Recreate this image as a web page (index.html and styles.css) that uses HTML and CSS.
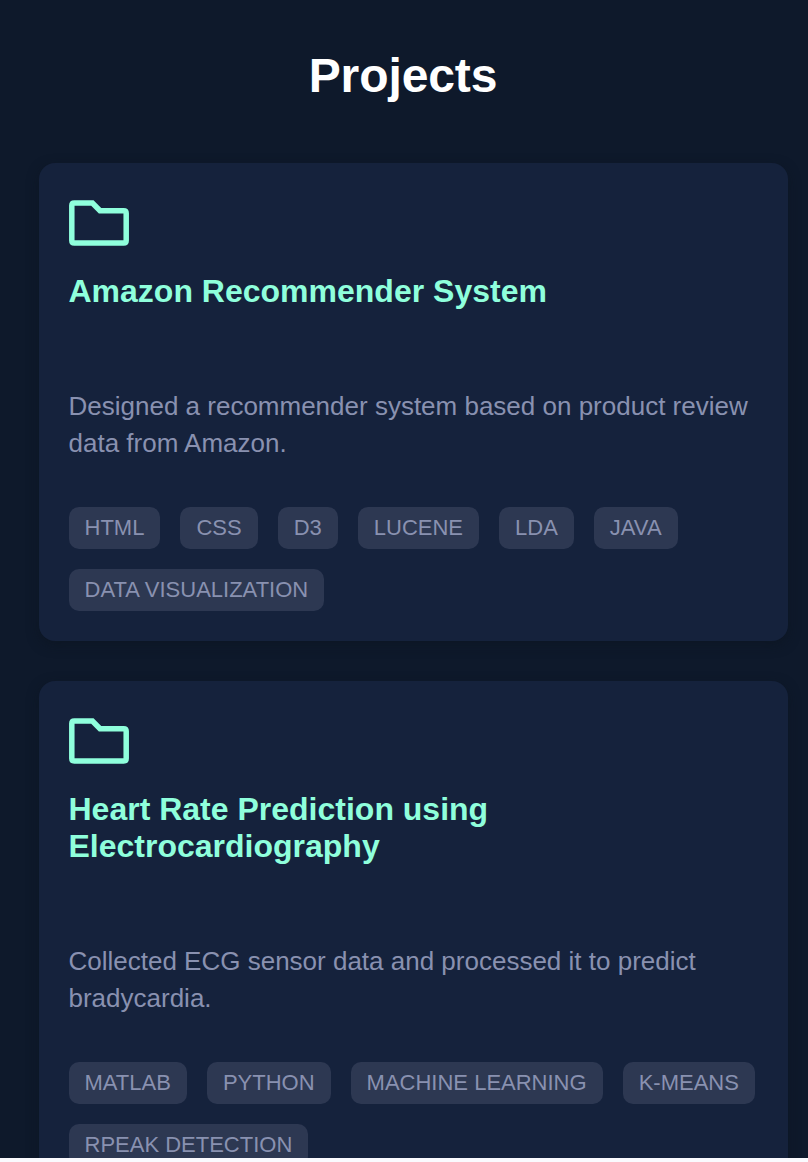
FILE: index.html
```html
<!DOCTYPE html>
<html lang="en">
<head>
<meta charset="utf-8">
<title>Projects</title>
<link rel="stylesheet" href="styles.css">
</head>
<body>
<main class="projects">
  <h1 class="heading">Projects</h1>
  <section class="list">
    <article class="card">
      <svg class="folder" viewBox="0 0 60 46"><path d="M5.3 3.1H23.4L31 10.8H54.7Q57.2 10.8 57.2 13.3V40.4Q57.2 42.9 54.7 42.9H5.3Q2.8 42.9 2.8 40.4V5.6Q2.8 3.1 5.3 3.1Z"/></svg>
      <h2 class="title">Amazon Recommender System</h2>
      <p class="description">Designed a recommender system based on product review data from Amazon.</p>
      <ul class="tags">
        <li class="tag">HTML</li><li class="tag">CSS</li><li class="tag">D3</li><li class="tag">LUCENE</li><li class="tag">LDA</li><li class="tag">JAVA</li><li class="tag">DATA VISUALIZATION</li>
      </ul>
    </article>
    <article class="card">
      <svg class="folder" viewBox="0 0 60 46"><path d="M5.3 3.1H23.4L31 10.8H54.7Q57.2 10.8 57.2 13.3V40.4Q57.2 42.9 54.7 42.9H5.3Q2.8 42.9 2.8 40.4V5.6Q2.8 3.1 5.3 3.1Z"/></svg>
      <h2 class="title">Heart Rate Prediction using Electrocardiography</h2>
      <p class="description">Collected ECG sensor data and processed it to predict bradycardia.</p>
      <ul class="tags">
        <li class="tag">MATLAB</li><li class="tag">PYTHON</li><li class="tag">MACHINE LEARNING</li><li class="tag">K-MEANS</li><li class="tag">RPEAK DETECTION</li>
      </ul>
    </article>
  </section>
</main>
</body>
</html>
```
FILE: styles.css
```css
* { box-sizing: border-box; }
body {
  margin: 0;
  height: 1162px;
  overflow: hidden;
  background: #fafafe;
  font-family: "Liberation Sans", Arial, sans-serif;
}
.projects {
  height: 1158px;
  overflow: hidden;
  background: #0e192b;
  padding: 48px 20px 0 39px;
}
.heading {
  margin: 0 0 60px;
  padding-right: 21px;
  font-size: 48px;
  letter-spacing: -0.1px;
  line-height: 55px;
  text-align: center;
  color: #fff;
}
.list {
  display: flex;
  flex-direction: column;
  gap: 40px;
}
.card {
  padding: 37px 30px 30px 29.5px;
  border-radius: 16px;
  background: #15223c;
  box-shadow: 0 4px 12px rgba(12, 20, 30, 0.5);
}
.folder {
  display: block;
  width: 60px;
  height: 46px;
  margin-left: 0.5px;
  fill: none;
  stroke: #8fffdc;
  stroke-width: 5.5;
}
.title {
  margin: 27px 0 78px;
  max-width: 600px;
  font-size: 32px;
  line-height: 37px;
  color: #8fffdc;
}
.description {
  margin: 0;
  font-size: 26px;
  line-height: 37px;
  color: #8991b0;
}
.tags {
  display: flex;
  flex-wrap: wrap;
  gap: 20px;
  margin: 45px -20px 0 0;
  padding: 0;
  list-style: none;
}
.tag {
  padding: 0 16px;
  border-radius: 10px;
  background: #2d3852;
  font-size: 22px;
  line-height: 42px;
  color: #8991b0;
  white-space: nowrap;
}
```
